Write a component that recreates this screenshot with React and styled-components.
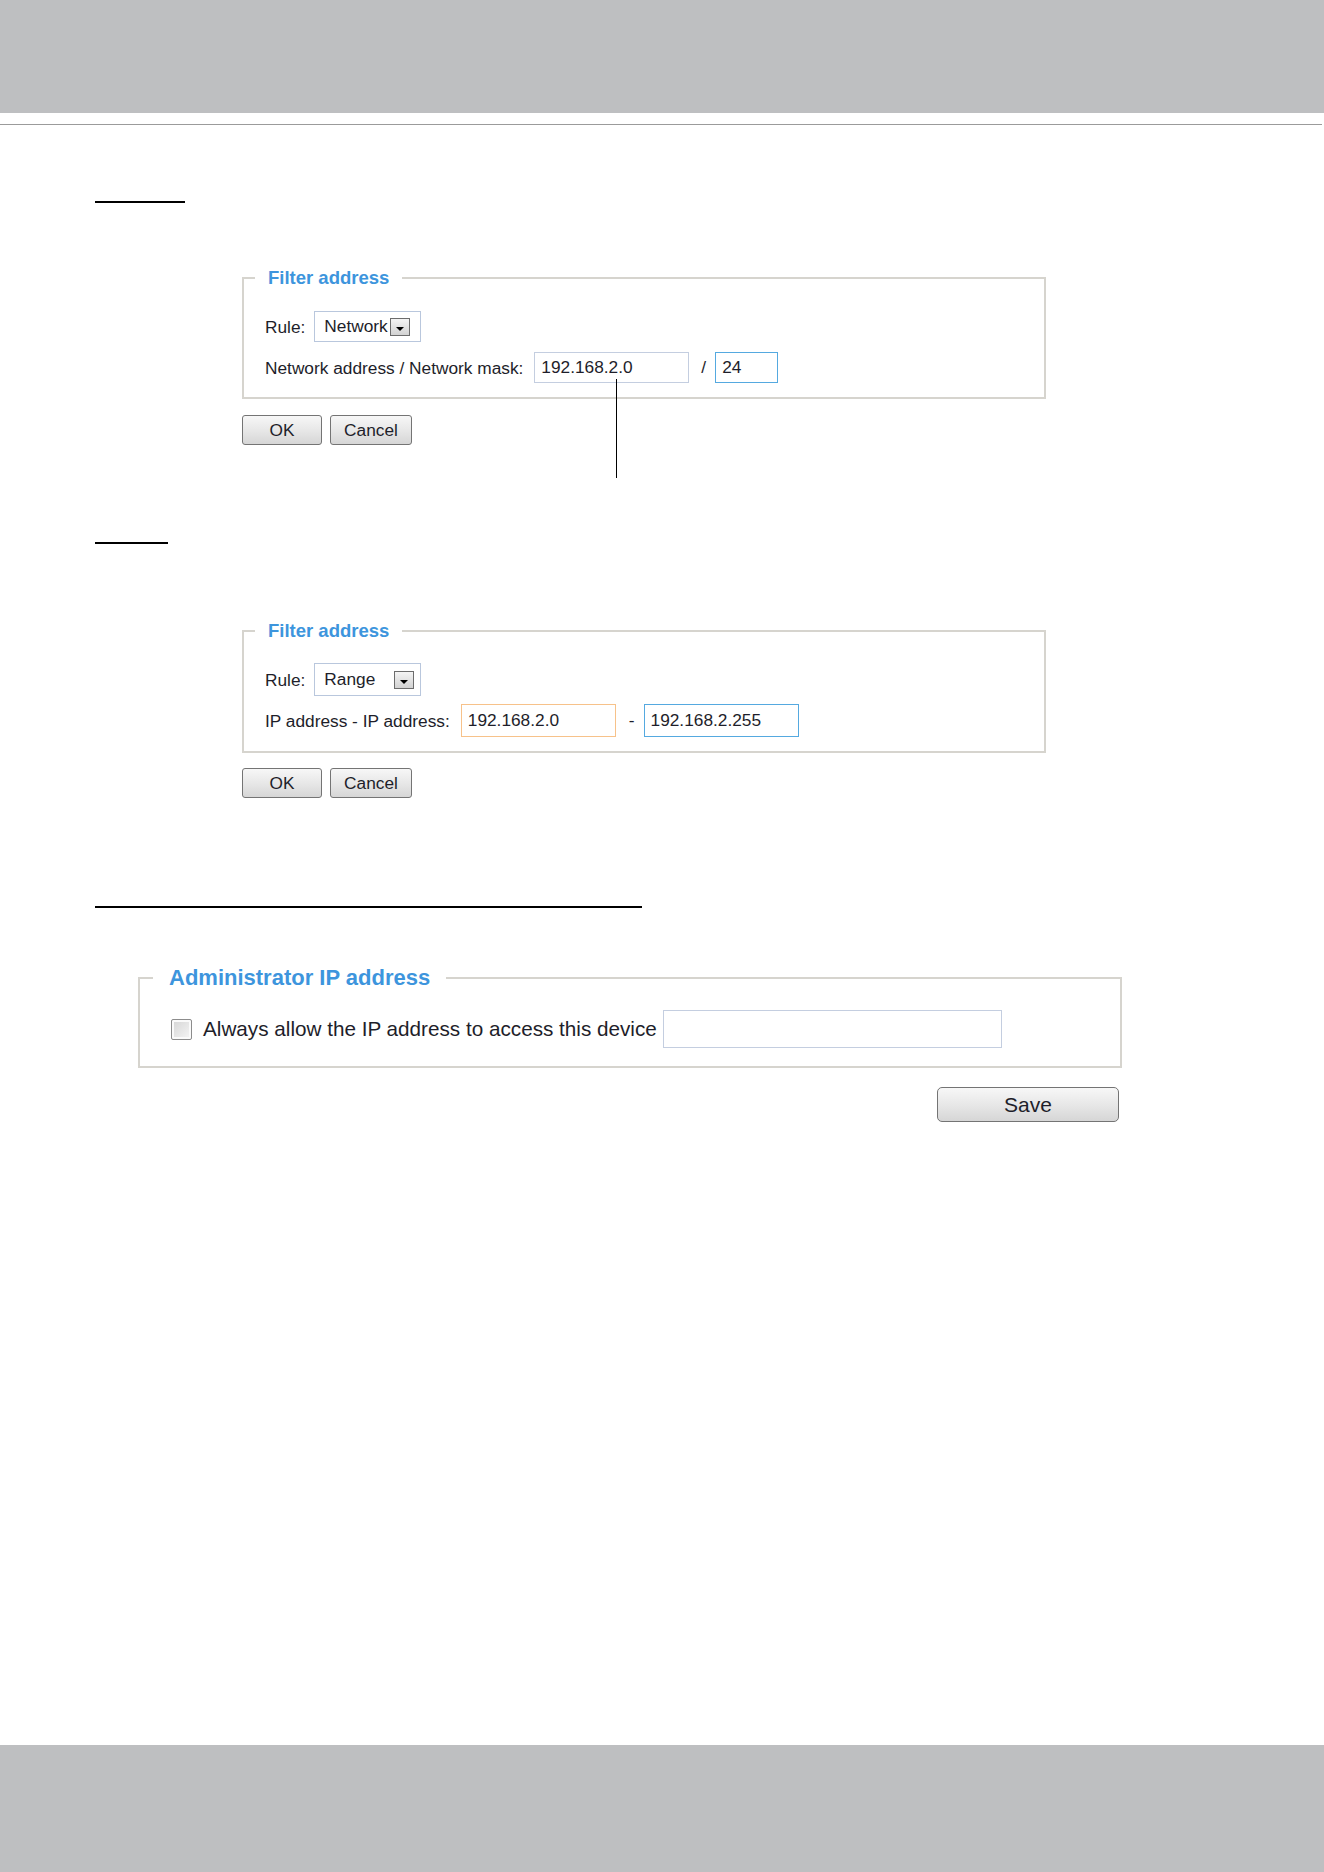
import styled, { createGlobalStyle } from "styled-components";

const GlobalStyle = createGlobalStyle`
	html, body {
		margin: 0;
		padding: 0;
		background: #fff;
	}
	body {
		font-family: "Liberation Sans", Arial, sans-serif;
		color: #1e1e2a;
	}
`;

const Page = styled.div`
	width: 1324px;
	height: 1872px;
	display: flex;
	flex-direction: column;
	overflow: hidden;
`;

const TopBand = styled.header`
	flex-shrink: 0;
	height: 113px;
	background: #bebfc1;
`;

const TopRule = styled.hr`
	flex-shrink: 0;
	margin: 11px 2px 0 0;
	border: 0;
	height: 1px;
	background: #9b9b9b;
`;

const Main = styled.main`
	flex: 1;
	padding-left: 95px;
`;

const FooterBand = styled.footer`
	flex-shrink: 0;
	height: 127px;
	background: #bebfc1;
`;

/* underline of a section title */
const HeadRule = styled.div`
	width: ${(props) => props.$width}px;
	height: 2px;
	margin-top: ${(props) => props.$top}px;
	background: #000;
`;

const Block = styled.div`
	position: relative;
	width: ${(props) => props.$width}px;
	margin-top: ${(props) => props.$top}px;
	margin-left: ${(props) => props.$indent}px;
`;

const Box = styled.fieldset`
	box-sizing: border-box;
	width: 100%;
	min-width: 0;
	margin: 0;
	padding: ${(props) => props.$pad};
	border: 2px solid #d6d4ce;
`;

const Caption = styled.legend`
	margin-left: ${(props) => props.$shift}px;
	padding: 0 ${(props) => props.$space}px;
	font-size: ${(props) => props.$size}px;
	line-height: ${(props) => props.$lh}px;
	font-weight: 700;
	color: #3d95dd;
`;

const Rows = styled.div`
	display: flex;
	flex-direction: column;
	gap: ${(props) => props.$gap}px;
`;

const Row = styled.div`
	display: flex;
	align-items: center;
	height: ${(props) => props.$h}px;
`;

const Label = styled.span`
	font-size: ${(props) => props.$size || 17.3}px;
	line-height: 20px;
	margin-right: ${(props) => props.$gap || 10}px;
	white-space: nowrap;
`;

const fieldBorders = {
	plain: "#c4cee0",
	focus: "#55a9e0",
	warn: "#f7c28a",
};

const Field = styled.input`
	box-sizing: border-box;
	width: ${(props) => props.$w}px;
	height: 100%;
	margin: 0;
	padding: 0 0 0 6px;
	border: 1px solid ${(props) => fieldBorders[props.$tone || "plain"]};
	border-radius: 0;
	background: #fff;
	font-family: inherit;
	font-size: ${(props) => props.$size || 17.3}px;
	color: #1e1e2a;
	outline: none;
`;

const Sep = styled.span`
	font-size: 17.3px;
	margin: ${(props) => props.$m};
`;

const Select = styled.div`
	box-sizing: border-box;
	display: flex;
	align-items: center;
	justify-content: space-between;
	width: 107px;
	height: 100%;
	padding: 0 ${(props) => props.$padR}px 0 9px;
	border: 1px solid #b9c7dd;
	font-size: 17.3px;
`;

const DropBtn = styled.span`
	box-sizing: border-box;
	position: relative;
	width: 20px;
	height: 18px;
	border: 1px solid #6c6c6c;
	background: linear-gradient(#f4f4f4, #d2d2d2);

	&::after {
		content: "";
		position: absolute;
		left: 5px;
		top: 8px;
		border-left: 4px solid transparent;
		border-right: 4px solid transparent;
		border-top: 4px solid #000;
	}
`;

const Actions = styled.div`
	display: flex;
	gap: ${(props) => props.$gap || 8}px;
	justify-content: ${(props) => props.$justify || "flex-start"};
	margin-top: ${(props) => props.$top}px;
	padding-right: ${(props) => props.$right || 0}px;
`;

const Btn = styled.button`
	box-sizing: border-box;
	width: ${(props) => props.$w}px;
	height: ${(props) => props.$h}px;
	padding: 0;
	border: 1px solid #747474;
	border-radius: ${(props) => props.$r || 3}px;
	background: linear-gradient(#f7f7f7, #e6e6e6 55%, #d6d6d6);
	font-family: inherit;
	font-size: ${(props) => props.$size || 17.3}px;
	color: #1e1e2a;
`;

const Check = styled.span`
	box-sizing: border-box;
	width: 21px;
	height: 21px;
	margin-right: 11px;
	border: 1px solid #8c8c8c;
	border-radius: 2px;
	background: linear-gradient(135deg, #d4d4d4, #f6f6f6);
	box-shadow: inset 0 0 0 2px #fafafa;
`;

/* leader line from the address field down to the callout */
const Pointer = styled.div`
	position: absolute;
	left: 374px;
	top: 112px;
	width: 1px;
	height: 99px;
	background: #000;
`;

function FilterBox({ pad, gap, children }) {
	return (
		<Box $pad={pad}>
			<Caption $shift={-10} $space={13} $size={18.5} $lh={22}>
				Filter address
			</Caption>
			<Rows $gap={gap}>{children}</Rows>
		</Box>
	);
}

function RuleRow({ h, value, padR }) {
	return (
		<Row $h={h}>
			<Label $gap={9}>Rule:</Label>
			<Select $padR={padR}>
				<span>{value}</span>
				<DropBtn />
			</Select>
		</Row>
	);
}

function OkCancel({ top }) {
	return (
		<Actions $top={top}>
			<Btn $w={80} $h={30}>
				OK
			</Btn>
			<Btn $w={82} $h={30}>
				Cancel
			</Btn>
		</Actions>
	);
}

export default function App() {
	return (
		<Page>
			<GlobalStyle />
			<TopBand />
			<TopRule />
			<Main>
				<HeadRule $width={90} $top={76} />
				<Block $width={804} $top={64} $indent={147}>
					<FilterBox pad="22px 0 14px 21px" gap={10}>
						<RuleRow h={31} value="Network" padR={10} />
						<Row $h={31}>
							<Label $gap={11}>Network address / Network mask:</Label>
							<Field $w={155} defaultValue="192.168.2.0" readOnly />
							<Sep $m="0 9px 0 12px">/</Sep>
							<Field $w={63} $tone="focus" defaultValue="24" readOnly />
						</Row>
					</FilterBox>
					<OkCancel top={16} />
					<Pointer />
				</Block>

				<HeadRule $width={73} $top={97} />
				<Block $width={804} $top={76} $indent={147}>
					<FilterBox pad="21px 0 14px 21px" gap={8}>
						<RuleRow h={33} value="Range" padR={6} />
						<Row $h={33}>
							<Label $gap={11}>IP address - IP address:</Label>
							<Field $w={155} $tone="warn" defaultValue="192.168.2.0" readOnly />
							<Sep $m="0 9px 0 13px">-</Sep>
							<Field $w={155} $tone="focus" defaultValue="192.168.2.255" readOnly />
						</Row>
					</FilterBox>
					<OkCancel top={15} />
				</Block>

				<HeadRule $width={547} $top={108} />
				<Block $width={984} $top={57} $indent={43}>
					<Box $pad="19px 0 18px 31px">
						<Caption $shift={-18} $space={16} $size={22} $lh={26}>
							Administrator IP address
						</Caption>
						<Row $h={38}>
							<Check />
							<Label $size={20.7} $gap={6}>
								Always allow the IP address to access this device
							</Label>
							<Field $w={339} $size={20.7} readOnly />
						</Row>
					</Box>
					<Actions $top={19} $justify="flex-end" $right={3}>
						<Btn $w={182} $h={35} $r={5} $size={21}>
							Save
						</Btn>
					</Actions>
				</Block>
			</Main>
			<FooterBand />
		</Page>
	);
}
